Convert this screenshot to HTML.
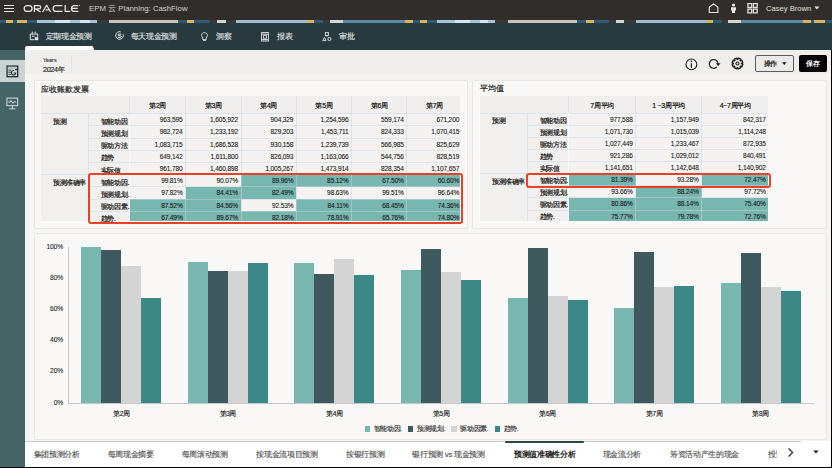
<!DOCTYPE html><html><head><meta charset="utf-8"><style>
*{box-sizing:border-box;margin:0;padding:0}
html,body{width:832px;height:468px;overflow:hidden;background:#f1f0ee;font-family:"Liberation Sans",sans-serif;color:#161513}
div,span,svg{position:absolute}
.t{white-space:nowrap;line-height:1}
.navt{font-size:8px;letter-spacing:-0.33px;color:#e4e7e7;top:33px;-webkit-text-stroke:0.12px #e4e7e7}
.btab{font-size:8px;letter-spacing:-0.33px;color:#4c4c4c;top:450.5px;-webkit-text-stroke:0.12px #4c4c4c}
.cell{font-size:7px;white-space:nowrap;line-height:1;-webkit-text-stroke:0.2px #161513}
</style></head><body>
<div style="left:0;top:0;width:832px;height:20px;background:#312d2a"></div>
<div style="left:4.2px;top:4.8px;width:10.2px;height:1.3px;background:#e8e4e0"></div>
<div style="left:4.2px;top:8.0px;width:10.2px;height:1.3px;background:#e8e4e0"></div>
<div style="left:4.2px;top:11.2px;width:10.2px;height:1.3px;background:#e8e4e0"></div>
<svg style="left:23px;top:4px" width="58" height="9" viewBox="0 0 58 9"><g fill="none" stroke="#ece8e4" stroke-width="1.25" stroke-linejoin="round"><rect x="1.15" y="1.55" width="7.9" height="5.8" rx="2.9"/><path d="M11.4 7.95 V1.55 H16 A1.7 1.7 0 0 1 16 4.95 H12.6 L17.6 7.95"/><path d="M19.6 7.95 L23.6 1.3 L27.6 7.95 M22.6 5.9 H25.6"/><path d="M39.3 1.55 H33 A2.9 2.9 0 0 0 33 7.35 H39.3"/><path d="M42.2 0.9 V7.35 H47.2"/><path d="M55.3 1.55 H51.4 A2.9 2.9 0 0 0 51.4 7.35 H55.3 M49.2 4.45 H54.6"/></g><circle cx="56.6" cy="1.4" r="0.5" fill="#ece8e4"/></svg>
<span class="t" style="left:89px;top:5px;font-size:7.8px;color:#d8d4cf">EPM 云 Planning: CashFlow</span>
<svg style="left:707px;top:3px" width="14" height="11" viewBox="0 0 14 11"><path d="M2.3 9.5 V4.3 L6.6 0.9 L10.9 4.3 V9.5 Z" fill="none" stroke="#e8e4e0" stroke-width="1.15" stroke-linejoin="round"/></svg>
<svg style="left:729px;top:3px" width="9" height="11" viewBox="0 0 9 11"><circle cx="4.5" cy="2" r="1.6" fill="#e8e4e0"/><path d="M2 4.3 H7 V7.6 H6 V10 H3 V7.6 H2 Z" fill="#e8e4e0"/></svg>
<svg style="left:747px;top:3px" width="12" height="11" viewBox="0 0 12 11"><g fill="none" stroke="#e8e4e0" stroke-width="1.25"><rect x="0.9" y="0.6" width="3.8" height="3.8"/><rect x="6.4" y="0.6" width="3.8" height="3.8"/><rect x="0.9" y="6.1" width="3.8" height="3.8"/><rect x="6.4" y="6.1" width="3.8" height="3.8"/></g></svg>
<span class="t" style="left:766px;top:5px;font-size:7.6px;color:#e4e0dc">Casey Brown</span>
<svg style="left:814px;top:6px" width="6" height="4" viewBox="0 0 6 4"><path d="M0.3 0.6 H5.5 L2.9 3.4 Z" fill="#e8e4e0"/></svg>
<div style="left:0;top:20px;width:832px;height:3px;background:linear-gradient(90deg,#2f5a76 0px,#2f5a76 6px,#d6b35c 6px,#d6b35c 13px,#2f5a76 13px,#2f5a76 17px,#d6b35c 17px,#d6b35c 27px,#2f5a76 27px,#2f5a76 37px,#a6c6d6 37px,#a6c6d6 55px,#d6e6ee 55px,#d6e6ee 70px,#a6c6d6 70px,#a6c6d6 80px,#d6e6ee 80px,#d6e6ee 90px,#a6c6d6 90px,#a6c6d6 97px,#3a3836 97px,#3a3836 109px,#c8c4bd 109px,#c8c4bd 178px,#2f5a76 178px,#2f5a76 187px,#d6b35c 187px,#d6b35c 194px,#2f5a76 194px,#2f5a76 210px,#3a3836 210px,#3a3836 217px,#d8d6d2 217px,#d8d6d2 226px,#3a3836 226px,#3a3836 236px,#9cc0d2 236px,#9cc0d2 307px,#d6b35c 307px,#d6b35c 314px,#2f5a76 314px,#2f5a76 323px,#3a3836 323px,#3a3836 330px,#d8d6d2 330px,#d8d6d2 343px,#5b8ba6 343px,#5b8ba6 405px,#d6b35c 405px,#d6b35c 413px,#2f5a76 413px,#2f5a76 420px,#d6b35c 420px,#d6b35c 427px,#2f5a76 427px,#2f5a76 437px,#a6c6d6 437px,#a6c6d6 455px,#d6e6ee 455px,#d6e6ee 470px,#a6c6d6 470px,#a6c6d6 480px,#d6e6ee 480px,#d6e6ee 488px,#a6c6d6 488px,#a6c6d6 495px,#3a3836 495px,#3a3836 508px,#c8c4bd 508px,#c8c4bd 577px,#2f5a76 577px,#2f5a76 586px,#d6b35c 586px,#d6b35c 594px,#2f5a76 594px,#2f5a76 609px,#3a3836 609px,#3a3836 616px,#d8d6d2 616px,#d8d6d2 624px,#3a3836 624px,#3a3836 636px,#9cc0d2 636px,#9cc0d2 706px,#d6b35c 706px,#d6b35c 713px,#2f5a76 713px,#2f5a76 722px,#3a3836 722px,#3a3836 728px,#d8d6d2 728px,#d8d6d2 741px,#5b8ba6 741px,#5b8ba6 803px,#d6b35c 803px,#d6b35c 811px,#2f5a76 811px,#2f5a76 814px,#d6b35c 814px,#d6b35c 825px,#2f5a76 825px,#2f5a76 832px)"></div>
<div style="left:0;top:23px;width:832px;height:27px;background:#283a3e"></div>
<svg style="left:22px;top:45px" width="76" height="6" viewBox="0 0 76 6"><path d="M3.2 6 V2.6 Q3.2 1.1 4.7 1.1 H70.6 L72.4 5.2 V6 Z" fill="#ffffff"/></svg>
<span class="t navt" style="left:45.5px">定期现金预测</span>
<span class="t navt" style="left:130.8px">每天现金预测</span>
<span class="t navt" style="left:216px">洞察</span>
<span class="t navt" style="left:277.2px">报表</span>
<span class="t navt" style="left:338.9px">审批</span>
<svg style="left:29px;top:31px" width="10" height="10" viewBox="0 0 10 10"><g fill="none" stroke="#e8eaea" stroke-width="1"><path d="M1.3 2.9 V8.7 H5.2"/><path d="M1.3 3 H8.7 V5.8"/><path d="M3.3 0.6 V2.6 M6.3 0.6 V2.6"/><path d="M3 5.2 H5.6"/></g><rect x="5.8" y="6.2" width="3.4" height="3" fill="#e8eaea"/></svg>
<svg style="left:114.5px;top:31px" width="10" height="10" viewBox="0 0 10 10"><path d="M8.07 3.2 A3.8 3.8 0 1 1 5.8 0.93" fill="none" stroke="#e4e7e7" stroke-width="0.95"/><path d="M6.3 3.1 H3.9 Q2.9 3.1 2.9 4.0 Q2.9 4.7 3.9 4.7 H5.1 Q6.1 4.7 6.1 5.6 Q6.1 6.4 5.1 6.4 H2.8" fill="none" stroke="#e4e7e7" stroke-width="1"/></svg>
<svg style="left:200.5px;top:31.5px" width="7" height="9" viewBox="0 0 7 9"><path d="M3.5 0.6 C5.3 0.6 6.4 1.9 6.4 3.4 C6.4 4.6 5.6 5.2 5.2 6 V7.6 H1.8 V6 C1.4 5.2 0.6 4.6 0.6 3.4 C0.6 1.9 1.7 0.6 3.5 0.6 Z M2.2 8.5 H4.8" fill="none" stroke="#e6e8e8" stroke-width="0.9"/></svg>
<svg style="left:261.3px;top:31.5px" width="8" height="10" viewBox="0 0 8 10"><rect x="0.6" y="0.6" width="6.8" height="8.4" fill="none" stroke="#e4e7e7" stroke-width="0.9"/><path d="M1.2 2.2 H6.8 M1.2 7.6 H6.8" stroke="#e4e7e7" stroke-width="1"/><rect x="2.4" y="3.6" width="3.2" height="2.6" fill="none" stroke="#e4e7e7" stroke-width="0.8"/></svg>
<svg style="left:322px;top:31.5px" width="10" height="10" viewBox="0 0 10 10"><g fill="none" stroke="#e4e7e7" stroke-width="0.9"><rect x="3.4" y="0.6" width="3" height="2.8"/><path d="M4.9 3.4 V4.8 M2.4 5.3 L0.7 8.6 H4.1 Z"/><circle cx="7.4" cy="7" r="1.6"/></g></svg>
<div style="left:0;top:50px;width:25px;height:418px;background:#456466"></div>
<div style="left:0;top:60px;width:25px;height:22px;background:#c8d3d4"></div>
<svg style="left:5.5px;top:64.5px" width="13" height="13" viewBox="0 0 13 13"><rect x="1.1" y="1.1" width="10.6" height="10.6" fill="#d6dcdc" stroke="#1e2a2b" stroke-width="1.3"/><rect x="1.8" y="1.8" width="9.2" height="2.3" fill="#b9c1c2"/><path d="M2.4 5.2 H5.5 M2.4 7.2 H5 M2.4 9.3 H5.4" stroke="#1e2a2b" stroke-width="0.9"/><path d="M9.9 7.8 A2.2 2.2 0 1 1 8.2 5.6" fill="none" stroke="#1e2a2b" stroke-width="1.1"/><path d="M7.6 8 H9.9" stroke="#1e2a2b" stroke-width="0.9"/><circle cx="10.1" cy="4.6" r="0.9" fill="#1e2a2b"/></svg>
<svg style="left:5.5px;top:96.5px" width="13" height="13" viewBox="0 0 13 13"><g fill="none" stroke="#e4eaea" stroke-width="0.9"><rect x="0.9" y="1.1" width="10.8" height="7.6"/><path d="M6.3 8.7 V11.6 M3.3 11.8 H9.3"/><path d="M2.4 5.1 H4.1 L5 3.6 L6.9 6.3 L7.9 4.8 H10"/></g></svg>
<div style="left:25px;top:50px;width:807px;height:24px;background:#efeeec"></div>
<div style="left:25px;top:74px;width:807px;height:394px;background:#f6f5f3"></div>
<span class="t" style="left:43px;top:57.5px;font-size:5.4px;color:#2a2a2a;-webkit-text-stroke:0.1px #2a2a2a">Years</span>
<span class="t" style="left:43px;top:66px;font-size:7.3px;color:#1f1f1f;letter-spacing:-0.38px;-webkit-text-stroke:0.15px #1f1f1f">2024年</span>
<div style="left:71px;top:56px;width:1px;height:17px;background:#e3e1dd"></div>
<svg style="left:685px;top:58px" width="13" height="13" viewBox="0 0 13 13"><circle cx="6.4" cy="6.4" r="5.4" fill="none" stroke="#1f1f1f" stroke-width="1.1"/><path d="M6.4 5.2 V10" stroke="#1f1f1f" stroke-width="1.2"/><circle cx="6.4" cy="3.4" r="0.8" fill="#1f1f1f"/></svg>
<svg style="left:708px;top:58px" width="13" height="13" viewBox="0 0 13 13"><path d="M10.1 5.9 A4.4 4.4 0 1 0 8.81 9.01" fill="none" stroke="#1f1f1f" stroke-width="1.2"/><path d="M7.9 5.3 H12.5 L10.2 8.3 Z" fill="#1f1f1f"/></svg>
<svg style="left:731.4px;top:57px" width="13" height="13" viewBox="0 0 13 13"><path d="M6.71 2.51 L7.32 1.16 L9.69 2.15 L9.18 3.53 L9.47 3.82 L10.85 3.31 L11.84 5.68 L10.49 6.29 L10.49 6.71 L11.84 7.32 L10.85 9.69 L9.47 9.18 L9.18 9.47 L9.69 10.85 L7.32 11.84 L6.71 10.49 L6.29 10.49 L5.68 11.84 L3.31 10.85 L3.82 9.47 L3.53 9.18 L2.15 9.69 L1.16 7.32 L2.51 6.71 L2.51 6.29 L1.16 5.68 L2.15 3.31 L3.53 3.82 L3.82 3.53 L3.31 2.15 L5.68 1.16 L6.29 2.51 Z" fill="none" stroke="#1f1f1f" stroke-width="1.4" stroke-linejoin="round"/><circle cx="6.5" cy="6.5" r="1.5" fill="none" stroke="#1f1f1f" stroke-width="1.1"/></svg>
<div style="left:755px;top:55px;width:38.5px;height:16.5px;background:#ebebea;border:1px solid #5c5c5c;border-radius:2px"></div>
<span class="t" style="left:763.5px;top:59.5px;font-size:7px;color:#1a1a1a;letter-spacing:-0.3px;-webkit-text-stroke:0.2px #1a1a1a">操作</span>
<svg style="left:782px;top:62px" width="5" height="4" viewBox="0 0 5 4"><path d="M0 0.3 H4.6 L2.3 3 Z" fill="#1a1a1a"/></svg>
<div style="left:799px;top:55px;width:27.5px;height:16.5px;background:#000;border-radius:2px"></div>
<span class="t" style="left:806px;top:59.5px;font-size:7px;color:#fff;letter-spacing:-0.3px;font-weight:bold">保存</span>
<div style="left:34px;top:80px;width:433.5px;height:148.5px;background:#f9f8f6;border:1px solid #e9e7e3;border-radius:2px"></div>
<div style="left:472px;top:80px;width:354.5px;height:148.5px;background:#f9f8f6;border:1px solid #e9e7e3;border-radius:2px"></div>
<div style="left:34px;top:233px;width:792.5px;height:206.5px;background:#f9f8f6;border:1px solid #e9e7e3;border-radius:2px"></div>
<span class="t" style="left:41px;top:85.6px;font-size:8px;letter-spacing:0px;color:#1a1a1a;-webkit-text-stroke:0.2px #1a1a1a">应收账款发票</span>
<span class="t" style="left:480px;top:85.2px;font-size:8px;letter-spacing:0px;color:#1a1a1a;-webkit-text-stroke:0.2px #1a1a1a">平均值</span>
<div style="left:41px;top:96px;width:421.2px;height:17.5px;background:#f0efed"></div>
<div style="left:41px;top:113.5px;width:88.80000000000001px;height:107.80000000000001px;background:#f1f0ee"></div>
<div style="left:129.8px;top:113.5px;width:55.79999999999998px;height:12.200000000000003px;background:#f4f3f1"></div>
<div style="left:185.6px;top:113.5px;width:55.400000000000006px;height:12.200000000000003px;background:#f4f3f1"></div>
<div style="left:241px;top:113.5px;width:55.39999999999998px;height:12.200000000000003px;background:#f4f3f1"></div>
<div style="left:296.4px;top:113.5px;width:55.200000000000045px;height:12.200000000000003px;background:#f4f3f1"></div>
<div style="left:351.6px;top:113.5px;width:55.19999999999999px;height:12.200000000000003px;background:#f4f3f1"></div>
<div style="left:406.8px;top:113.5px;width:55.39999999999998px;height:12.200000000000003px;background:#f4f3f1"></div>
<div style="left:129.8px;top:125.7px;width:55.79999999999998px;height:12.200000000000003px;background:#f4f3f1"></div>
<div style="left:185.6px;top:125.7px;width:55.400000000000006px;height:12.200000000000003px;background:#f4f3f1"></div>
<div style="left:241px;top:125.7px;width:55.39999999999998px;height:12.200000000000003px;background:#f4f3f1"></div>
<div style="left:296.4px;top:125.7px;width:55.200000000000045px;height:12.200000000000003px;background:#f4f3f1"></div>
<div style="left:351.6px;top:125.7px;width:55.19999999999999px;height:12.200000000000003px;background:#f4f3f1"></div>
<div style="left:406.8px;top:125.7px;width:55.39999999999998px;height:12.200000000000003px;background:#f4f3f1"></div>
<div style="left:129.8px;top:137.9px;width:55.79999999999998px;height:12.199999999999989px;background:#f4f3f1"></div>
<div style="left:185.6px;top:137.9px;width:55.400000000000006px;height:12.199999999999989px;background:#f4f3f1"></div>
<div style="left:241px;top:137.9px;width:55.39999999999998px;height:12.199999999999989px;background:#f4f3f1"></div>
<div style="left:296.4px;top:137.9px;width:55.200000000000045px;height:12.199999999999989px;background:#f4f3f1"></div>
<div style="left:351.6px;top:137.9px;width:55.19999999999999px;height:12.199999999999989px;background:#f4f3f1"></div>
<div style="left:406.8px;top:137.9px;width:55.39999999999998px;height:12.199999999999989px;background:#f4f3f1"></div>
<div style="left:129.8px;top:150.1px;width:55.79999999999998px;height:12.200000000000017px;background:#f4f3f1"></div>
<div style="left:185.6px;top:150.1px;width:55.400000000000006px;height:12.200000000000017px;background:#f4f3f1"></div>
<div style="left:241px;top:150.1px;width:55.39999999999998px;height:12.200000000000017px;background:#f4f3f1"></div>
<div style="left:296.4px;top:150.1px;width:55.200000000000045px;height:12.200000000000017px;background:#f4f3f1"></div>
<div style="left:351.6px;top:150.1px;width:55.19999999999999px;height:12.200000000000017px;background:#f4f3f1"></div>
<div style="left:406.8px;top:150.1px;width:55.39999999999998px;height:12.200000000000017px;background:#f4f3f1"></div>
<div style="left:129.8px;top:162.3px;width:55.79999999999998px;height:12.199999999999989px;background:#f4f3f1"></div>
<div style="left:185.6px;top:162.3px;width:55.400000000000006px;height:12.199999999999989px;background:#f4f3f1"></div>
<div style="left:241px;top:162.3px;width:55.39999999999998px;height:12.199999999999989px;background:#f4f3f1"></div>
<div style="left:296.4px;top:162.3px;width:55.200000000000045px;height:12.199999999999989px;background:#f4f3f1"></div>
<div style="left:351.6px;top:162.3px;width:55.19999999999999px;height:12.199999999999989px;background:#f4f3f1"></div>
<div style="left:406.8px;top:162.3px;width:55.39999999999998px;height:12.199999999999989px;background:#f4f3f1"></div>
<div style="left:129.8px;top:174.5px;width:55.79999999999998px;height:12.199999999999989px;background:#f4f3f1"></div>
<div style="left:185.6px;top:174.5px;width:55.400000000000006px;height:12.199999999999989px;background:#f4f3f1"></div>
<div style="left:241px;top:174.5px;width:55.39999999999998px;height:12.199999999999989px;background:#78b6b0"></div>
<div style="left:296.4px;top:174.5px;width:55.200000000000045px;height:12.199999999999989px;background:#78b6b0"></div>
<div style="left:351.6px;top:174.5px;width:55.19999999999999px;height:12.199999999999989px;background:#78b6b0"></div>
<div style="left:406.8px;top:174.5px;width:55.39999999999998px;height:12.199999999999989px;background:#78b6b0"></div>
<div style="left:129.8px;top:186.7px;width:55.79999999999998px;height:12.199999999999989px;background:#f4f3f1"></div>
<div style="left:185.6px;top:186.7px;width:55.400000000000006px;height:12.199999999999989px;background:#78b6b0"></div>
<div style="left:241px;top:186.7px;width:55.39999999999998px;height:12.199999999999989px;background:#78b6b0"></div>
<div style="left:296.4px;top:186.7px;width:55.200000000000045px;height:12.199999999999989px;background:#f4f3f1"></div>
<div style="left:351.6px;top:186.7px;width:55.19999999999999px;height:12.199999999999989px;background:#f4f3f1"></div>
<div style="left:406.8px;top:186.7px;width:55.39999999999998px;height:12.199999999999989px;background:#f4f3f1"></div>
<div style="left:129.8px;top:198.89999999999998px;width:55.79999999999998px;height:12.200000000000017px;background:#78b6b0"></div>
<div style="left:185.6px;top:198.89999999999998px;width:55.400000000000006px;height:12.200000000000017px;background:#78b6b0"></div>
<div style="left:241px;top:198.89999999999998px;width:55.39999999999998px;height:12.200000000000017px;background:#f4f3f1"></div>
<div style="left:296.4px;top:198.89999999999998px;width:55.200000000000045px;height:12.200000000000017px;background:#78b6b0"></div>
<div style="left:351.6px;top:198.89999999999998px;width:55.19999999999999px;height:12.200000000000017px;background:#78b6b0"></div>
<div style="left:406.8px;top:198.89999999999998px;width:55.39999999999998px;height:12.200000000000017px;background:#78b6b0"></div>
<div style="left:129.8px;top:211.1px;width:55.79999999999998px;height:10.200000000000017px;background:#78b6b0"></div>
<div style="left:185.6px;top:211.1px;width:55.400000000000006px;height:10.200000000000017px;background:#78b6b0"></div>
<div style="left:241px;top:211.1px;width:55.39999999999998px;height:10.200000000000017px;background:#78b6b0"></div>
<div style="left:296.4px;top:211.1px;width:55.200000000000045px;height:10.200000000000017px;background:#78b6b0"></div>
<div style="left:351.6px;top:211.1px;width:55.19999999999999px;height:10.200000000000017px;background:#78b6b0"></div>
<div style="left:406.8px;top:211.1px;width:55.39999999999998px;height:10.200000000000017px;background:#78b6b0"></div>
<div style="left:41px;top:113.2px;width:421.2px;height:1px;background:rgba(200,214,228,0.5)"></div>
<div style="left:88.6px;top:125.4px;width:373.6px;height:1px;background:rgba(200,214,228,0.5)"></div>
<div style="left:88.6px;top:137.6px;width:373.6px;height:1px;background:rgba(200,214,228,0.5)"></div>
<div style="left:88.6px;top:149.79999999999998px;width:373.6px;height:1px;background:rgba(200,214,228,0.5)"></div>
<div style="left:88.6px;top:162.0px;width:373.6px;height:1px;background:rgba(200,214,228,0.5)"></div>
<div style="left:88.6px;top:174.2px;width:373.6px;height:1px;background:rgba(200,214,228,0.5)"></div>
<div style="left:88.6px;top:186.39999999999998px;width:373.6px;height:1px;background:rgba(200,214,228,0.5)"></div>
<div style="left:88.6px;top:198.59999999999997px;width:373.6px;height:1px;background:rgba(200,214,228,0.5)"></div>
<div style="left:88.6px;top:210.79999999999998px;width:373.6px;height:1px;background:rgba(200,214,228,0.5)"></div>
<div style="left:41px;top:174.2px;width:47.599999999999994px;height:1px;background:rgba(200,214,228,0.5)"></div>
<div style="left:88.1px;top:113.5px;width:1px;height:107.80000000000001px;background:rgba(200,214,228,0.5)"></div>
<div style="left:129.3px;top:96px;width:1px;height:17.5px;background:rgba(200,214,228,0.5)"></div>
<div style="left:129.3px;top:113.5px;width:1px;height:107.80000000000001px;background:#f7f7f6"></div>
<div style="left:185.1px;top:96px;width:1px;height:125.30000000000001px;background:rgba(200,214,228,0.5)"></div>
<div style="left:240.5px;top:96px;width:1px;height:125.30000000000001px;background:rgba(200,214,228,0.5)"></div>
<div style="left:295.9px;top:96px;width:1px;height:125.30000000000001px;background:rgba(200,214,228,0.5)"></div>
<div style="left:351.1px;top:96px;width:1px;height:125.30000000000001px;background:rgba(200,214,228,0.5)"></div>
<div style="left:406.3px;top:96px;width:1px;height:125.30000000000001px;background:rgba(200,214,228,0.5)"></div>
<span class="t cell" style="left:129.8px;width:55.79999999999998px;top:101.7px;text-align:center;letter-spacing:-0.3px">第2周</span>
<span class="t cell" style="left:185.6px;width:55.400000000000006px;top:101.7px;text-align:center;letter-spacing:-0.3px">第3周</span>
<span class="t cell" style="left:241px;width:55.39999999999998px;top:101.7px;text-align:center;letter-spacing:-0.3px">第4周</span>
<span class="t cell" style="left:296.4px;width:55.200000000000045px;top:101.7px;text-align:center;letter-spacing:-0.3px">第5周</span>
<span class="t cell" style="left:351.6px;width:55.19999999999999px;top:101.7px;text-align:center;letter-spacing:-0.3px">第6周</span>
<span class="t cell" style="left:406.8px;width:55.39999999999998px;top:101.7px;text-align:center;letter-spacing:-0.3px">第7周</span>
<span class="t cell" style="left:53px;top:117.6px;letter-spacing:-0.5px">预测</span>
<span class="t cell" style="left:53px;top:178.6px;letter-spacing:-0.5px">预测准确率</span>
<span class="t cell" style="left:100.6px;top:117.8px;letter-spacing:-0.3px">智能动因</span>
<span class="t cell" style="left:100.6px;top:130.0px;letter-spacing:-0.3px">预测规划</span>
<span class="t cell" style="left:100.6px;top:142.20000000000002px;letter-spacing:-0.3px">驱动方法</span>
<span class="t cell" style="left:100.6px;top:154.4px;letter-spacing:-0.3px">趋势</span>
<span class="t cell" style="left:100.6px;top:166.60000000000002px;letter-spacing:-0.3px">实际值</span>
<span class="t cell" style="left:100.6px;top:178.8px;letter-spacing:-0.3px">智能动因.</span>
<span class="t cell" style="left:100.6px;top:191.0px;letter-spacing:-0.3px">预测规划.</span>
<span class="t cell" style="left:100.6px;top:203.2px;letter-spacing:-0.3px">驱动因素.</span>
<span class="t cell" style="left:100.6px;top:215.4px;letter-spacing:-0.3px">趋势.</span>
<span class="t cell" style="left:129.8px;width:52.79999999999998px;top:117.2px;text-align:right;font-size:6.6px;letter-spacing:-0.15px;-webkit-text-stroke:0.08px #161513">963,595</span>
<span class="t cell" style="left:185.6px;width:52.400000000000006px;top:117.2px;text-align:right;font-size:6.6px;letter-spacing:-0.15px;-webkit-text-stroke:0.08px #161513">1,605,922</span>
<span class="t cell" style="left:241px;width:52.39999999999998px;top:117.2px;text-align:right;font-size:6.6px;letter-spacing:-0.15px;-webkit-text-stroke:0.08px #161513">904,329</span>
<span class="t cell" style="left:296.4px;width:52.200000000000045px;top:117.2px;text-align:right;font-size:6.6px;letter-spacing:-0.15px;-webkit-text-stroke:0.08px #161513">1,254,596</span>
<span class="t cell" style="left:351.6px;width:52.19999999999999px;top:117.2px;text-align:right;font-size:6.6px;letter-spacing:-0.15px;-webkit-text-stroke:0.08px #161513">559,174</span>
<span class="t cell" style="left:406.8px;width:52.39999999999998px;top:117.2px;text-align:right;font-size:6.6px;letter-spacing:-0.15px;-webkit-text-stroke:0.08px #161513">671,200</span>
<span class="t cell" style="left:129.8px;width:52.79999999999998px;top:129.4px;text-align:right;font-size:6.6px;letter-spacing:-0.15px;-webkit-text-stroke:0.08px #161513">982,724</span>
<span class="t cell" style="left:185.6px;width:52.400000000000006px;top:129.4px;text-align:right;font-size:6.6px;letter-spacing:-0.15px;-webkit-text-stroke:0.08px #161513">1,233,192</span>
<span class="t cell" style="left:241px;width:52.39999999999998px;top:129.4px;text-align:right;font-size:6.6px;letter-spacing:-0.15px;-webkit-text-stroke:0.08px #161513">829,203</span>
<span class="t cell" style="left:296.4px;width:52.200000000000045px;top:129.4px;text-align:right;font-size:6.6px;letter-spacing:-0.15px;-webkit-text-stroke:0.08px #161513">1,453,711</span>
<span class="t cell" style="left:351.6px;width:52.19999999999999px;top:129.4px;text-align:right;font-size:6.6px;letter-spacing:-0.15px;-webkit-text-stroke:0.08px #161513">824,333</span>
<span class="t cell" style="left:406.8px;width:52.39999999999998px;top:129.4px;text-align:right;font-size:6.6px;letter-spacing:-0.15px;-webkit-text-stroke:0.08px #161513">1,070,415</span>
<span class="t cell" style="left:129.8px;width:52.79999999999998px;top:141.6px;text-align:right;font-size:6.6px;letter-spacing:-0.15px;-webkit-text-stroke:0.08px #161513">1,083,715</span>
<span class="t cell" style="left:185.6px;width:52.400000000000006px;top:141.6px;text-align:right;font-size:6.6px;letter-spacing:-0.15px;-webkit-text-stroke:0.08px #161513">1,686,528</span>
<span class="t cell" style="left:241px;width:52.39999999999998px;top:141.6px;text-align:right;font-size:6.6px;letter-spacing:-0.15px;-webkit-text-stroke:0.08px #161513">930,158</span>
<span class="t cell" style="left:296.4px;width:52.200000000000045px;top:141.6px;text-align:right;font-size:6.6px;letter-spacing:-0.15px;-webkit-text-stroke:0.08px #161513">1,239,739</span>
<span class="t cell" style="left:351.6px;width:52.19999999999999px;top:141.6px;text-align:right;font-size:6.6px;letter-spacing:-0.15px;-webkit-text-stroke:0.08px #161513">566,985</span>
<span class="t cell" style="left:406.8px;width:52.39999999999998px;top:141.6px;text-align:right;font-size:6.6px;letter-spacing:-0.15px;-webkit-text-stroke:0.08px #161513">825,629</span>
<span class="t cell" style="left:129.8px;width:52.79999999999998px;top:153.79999999999998px;text-align:right;font-size:6.6px;letter-spacing:-0.15px;-webkit-text-stroke:0.08px #161513">649,142</span>
<span class="t cell" style="left:185.6px;width:52.400000000000006px;top:153.79999999999998px;text-align:right;font-size:6.6px;letter-spacing:-0.15px;-webkit-text-stroke:0.08px #161513">1,611,800</span>
<span class="t cell" style="left:241px;width:52.39999999999998px;top:153.79999999999998px;text-align:right;font-size:6.6px;letter-spacing:-0.15px;-webkit-text-stroke:0.08px #161513">826,093</span>
<span class="t cell" style="left:296.4px;width:52.200000000000045px;top:153.79999999999998px;text-align:right;font-size:6.6px;letter-spacing:-0.15px;-webkit-text-stroke:0.08px #161513">1,163,066</span>
<span class="t cell" style="left:351.6px;width:52.19999999999999px;top:153.79999999999998px;text-align:right;font-size:6.6px;letter-spacing:-0.15px;-webkit-text-stroke:0.08px #161513">544,756</span>
<span class="t cell" style="left:406.8px;width:52.39999999999998px;top:153.79999999999998px;text-align:right;font-size:6.6px;letter-spacing:-0.15px;-webkit-text-stroke:0.08px #161513">828,519</span>
<span class="t cell" style="left:129.8px;width:52.79999999999998px;top:166.0px;text-align:right;font-size:6.6px;letter-spacing:-0.15px;-webkit-text-stroke:0.08px #161513">961,780</span>
<span class="t cell" style="left:185.6px;width:52.400000000000006px;top:166.0px;text-align:right;font-size:6.6px;letter-spacing:-0.15px;-webkit-text-stroke:0.08px #161513">1,460,898</span>
<span class="t cell" style="left:241px;width:52.39999999999998px;top:166.0px;text-align:right;font-size:6.6px;letter-spacing:-0.15px;-webkit-text-stroke:0.08px #161513">1,005,267</span>
<span class="t cell" style="left:296.4px;width:52.200000000000045px;top:166.0px;text-align:right;font-size:6.6px;letter-spacing:-0.15px;-webkit-text-stroke:0.08px #161513">1,473,914</span>
<span class="t cell" style="left:351.6px;width:52.19999999999999px;top:166.0px;text-align:right;font-size:6.6px;letter-spacing:-0.15px;-webkit-text-stroke:0.08px #161513">828,354</span>
<span class="t cell" style="left:406.8px;width:52.39999999999998px;top:166.0px;text-align:right;font-size:6.6px;letter-spacing:-0.15px;-webkit-text-stroke:0.08px #161513">1,107,657</span>
<span class="t cell" style="left:129.8px;width:52.79999999999998px;top:178.2px;text-align:right;font-size:6.6px;letter-spacing:-0.15px;-webkit-text-stroke:0.08px #161513">99.81%</span>
<span class="t cell" style="left:185.6px;width:52.400000000000006px;top:178.2px;text-align:right;font-size:6.6px;letter-spacing:-0.15px;-webkit-text-stroke:0.08px #161513">90.07%</span>
<span class="t cell" style="left:241px;width:52.39999999999998px;top:178.2px;text-align:right;font-size:6.6px;letter-spacing:-0.15px;-webkit-text-stroke:0.08px #161513">89.96%</span>
<span class="t cell" style="left:296.4px;width:52.200000000000045px;top:178.2px;text-align:right;font-size:6.6px;letter-spacing:-0.15px;-webkit-text-stroke:0.08px #161513">85.12%</span>
<span class="t cell" style="left:351.6px;width:52.19999999999999px;top:178.2px;text-align:right;font-size:6.6px;letter-spacing:-0.15px;-webkit-text-stroke:0.08px #161513">67.50%</span>
<span class="t cell" style="left:406.8px;width:52.39999999999998px;top:178.2px;text-align:right;font-size:6.6px;letter-spacing:-0.15px;-webkit-text-stroke:0.08px #161513">60.60%</span>
<span class="t cell" style="left:129.8px;width:52.79999999999998px;top:190.39999999999998px;text-align:right;font-size:6.6px;letter-spacing:-0.15px;-webkit-text-stroke:0.08px #161513">97.82%</span>
<span class="t cell" style="left:185.6px;width:52.400000000000006px;top:190.39999999999998px;text-align:right;font-size:6.6px;letter-spacing:-0.15px;-webkit-text-stroke:0.08px #161513">84.41%</span>
<span class="t cell" style="left:241px;width:52.39999999999998px;top:190.39999999999998px;text-align:right;font-size:6.6px;letter-spacing:-0.15px;-webkit-text-stroke:0.08px #161513">82.49%</span>
<span class="t cell" style="left:296.4px;width:52.200000000000045px;top:190.39999999999998px;text-align:right;font-size:6.6px;letter-spacing:-0.15px;-webkit-text-stroke:0.08px #161513">98.63%</span>
<span class="t cell" style="left:351.6px;width:52.19999999999999px;top:190.39999999999998px;text-align:right;font-size:6.6px;letter-spacing:-0.15px;-webkit-text-stroke:0.08px #161513">99.51%</span>
<span class="t cell" style="left:406.8px;width:52.39999999999998px;top:190.39999999999998px;text-align:right;font-size:6.6px;letter-spacing:-0.15px;-webkit-text-stroke:0.08px #161513">96.64%</span>
<span class="t cell" style="left:129.8px;width:52.79999999999998px;top:202.59999999999997px;text-align:right;font-size:6.6px;letter-spacing:-0.15px;-webkit-text-stroke:0.08px #161513">87.52%</span>
<span class="t cell" style="left:185.6px;width:52.400000000000006px;top:202.59999999999997px;text-align:right;font-size:6.6px;letter-spacing:-0.15px;-webkit-text-stroke:0.08px #161513">84.56%</span>
<span class="t cell" style="left:241px;width:52.39999999999998px;top:202.59999999999997px;text-align:right;font-size:6.6px;letter-spacing:-0.15px;-webkit-text-stroke:0.08px #161513">92.53%</span>
<span class="t cell" style="left:296.4px;width:52.200000000000045px;top:202.59999999999997px;text-align:right;font-size:6.6px;letter-spacing:-0.15px;-webkit-text-stroke:0.08px #161513">84.11%</span>
<span class="t cell" style="left:351.6px;width:52.19999999999999px;top:202.59999999999997px;text-align:right;font-size:6.6px;letter-spacing:-0.15px;-webkit-text-stroke:0.08px #161513">68.45%</span>
<span class="t cell" style="left:406.8px;width:52.39999999999998px;top:202.59999999999997px;text-align:right;font-size:6.6px;letter-spacing:-0.15px;-webkit-text-stroke:0.08px #161513">74.36%</span>
<span class="t cell" style="left:129.8px;width:52.79999999999998px;top:214.79999999999998px;text-align:right;font-size:6.6px;letter-spacing:-0.15px;-webkit-text-stroke:0.08px #161513">67.49%</span>
<span class="t cell" style="left:185.6px;width:52.400000000000006px;top:214.79999999999998px;text-align:right;font-size:6.6px;letter-spacing:-0.15px;-webkit-text-stroke:0.08px #161513">89.67%</span>
<span class="t cell" style="left:241px;width:52.39999999999998px;top:214.79999999999998px;text-align:right;font-size:6.6px;letter-spacing:-0.15px;-webkit-text-stroke:0.08px #161513">82.18%</span>
<span class="t cell" style="left:296.4px;width:52.200000000000045px;top:214.79999999999998px;text-align:right;font-size:6.6px;letter-spacing:-0.15px;-webkit-text-stroke:0.08px #161513">78.91%</span>
<span class="t cell" style="left:351.6px;width:52.19999999999999px;top:214.79999999999998px;text-align:right;font-size:6.6px;letter-spacing:-0.15px;-webkit-text-stroke:0.08px #161513">65.76%</span>
<span class="t cell" style="left:406.8px;width:52.39999999999998px;top:214.79999999999998px;text-align:right;font-size:6.6px;letter-spacing:-0.15px;-webkit-text-stroke:0.08px #161513">74.80%</span>
<div style="left:41px;top:221.6px;width:421.2px;height:1.8px;background:#fefefd"></div>
<div style="left:460.2px;top:95px;width:2.6px;height:130px;background:#f9f8f6"></div>
<div style="left:87.6px;top:172.7px;width:375.9px;height:51.400000000000006px;border:2px solid #e8412a;border-radius:3px"></div>
<div style="left:480.2px;top:96px;width:288.59999999999997px;height:17.0px;background:#f0efed"></div>
<div style="left:480.2px;top:113.0px;width:88.50000000000006px;height:108.30000000000001px;background:#f1f0ee"></div>
<div style="left:568.7px;top:113.0px;width:67.0px;height:12.099999999999994px;background:#f4f3f1"></div>
<div style="left:635.7px;top:113.0px;width:66.0px;height:12.099999999999994px;background:#f4f3f1"></div>
<div style="left:701.7px;top:113.0px;width:67.09999999999991px;height:12.099999999999994px;background:#f4f3f1"></div>
<div style="left:568.7px;top:125.1px;width:67.0px;height:12.099999999999994px;background:#f4f3f1"></div>
<div style="left:635.7px;top:125.1px;width:66.0px;height:12.099999999999994px;background:#f4f3f1"></div>
<div style="left:701.7px;top:125.1px;width:67.09999999999991px;height:12.099999999999994px;background:#f4f3f1"></div>
<div style="left:568.7px;top:137.2px;width:67.0px;height:12.100000000000023px;background:#f4f3f1"></div>
<div style="left:635.7px;top:137.2px;width:66.0px;height:12.100000000000023px;background:#f4f3f1"></div>
<div style="left:701.7px;top:137.2px;width:67.09999999999991px;height:12.100000000000023px;background:#f4f3f1"></div>
<div style="left:568.7px;top:149.3px;width:67.0px;height:12.099999999999994px;background:#f4f3f1"></div>
<div style="left:635.7px;top:149.3px;width:66.0px;height:12.099999999999994px;background:#f4f3f1"></div>
<div style="left:701.7px;top:149.3px;width:67.09999999999991px;height:12.099999999999994px;background:#f4f3f1"></div>
<div style="left:568.7px;top:161.4px;width:67.0px;height:12.099999999999994px;background:#f4f3f1"></div>
<div style="left:635.7px;top:161.4px;width:66.0px;height:12.099999999999994px;background:#f4f3f1"></div>
<div style="left:701.7px;top:161.4px;width:67.09999999999991px;height:12.099999999999994px;background:#f4f3f1"></div>
<div style="left:568.7px;top:173.5px;width:67.0px;height:12.099999999999994px;background:#78b6b0"></div>
<div style="left:635.7px;top:173.5px;width:66.0px;height:12.099999999999994px;background:#f4f3f1"></div>
<div style="left:701.7px;top:173.5px;width:67.09999999999991px;height:12.099999999999994px;background:#78b6b0"></div>
<div style="left:568.7px;top:185.6px;width:67.0px;height:12.099999999999994px;background:#f4f3f1"></div>
<div style="left:635.7px;top:185.6px;width:66.0px;height:12.099999999999994px;background:#78b6b0"></div>
<div style="left:701.7px;top:185.6px;width:67.09999999999991px;height:12.099999999999994px;background:#f4f3f1"></div>
<div style="left:568.7px;top:197.7px;width:67.0px;height:12.100000000000023px;background:#78b6b0"></div>
<div style="left:635.7px;top:197.7px;width:66.0px;height:12.100000000000023px;background:#78b6b0"></div>
<div style="left:701.7px;top:197.7px;width:67.09999999999991px;height:12.100000000000023px;background:#78b6b0"></div>
<div style="left:568.7px;top:209.8px;width:67.0px;height:11.5px;background:#78b6b0"></div>
<div style="left:635.7px;top:209.8px;width:66.0px;height:11.5px;background:#78b6b0"></div>
<div style="left:701.7px;top:209.8px;width:67.09999999999991px;height:11.5px;background:#78b6b0"></div>
<div style="left:480.2px;top:112.7px;width:288.59999999999997px;height:1px;background:rgba(200,214,228,0.5)"></div>
<div style="left:527.5px;top:124.8px;width:241.29999999999995px;height:1px;background:rgba(200,214,228,0.5)"></div>
<div style="left:527.5px;top:136.89999999999998px;width:241.29999999999995px;height:1px;background:rgba(200,214,228,0.5)"></div>
<div style="left:527.5px;top:149.0px;width:241.29999999999995px;height:1px;background:rgba(200,214,228,0.5)"></div>
<div style="left:527.5px;top:161.1px;width:241.29999999999995px;height:1px;background:rgba(200,214,228,0.5)"></div>
<div style="left:527.5px;top:173.2px;width:241.29999999999995px;height:1px;background:rgba(200,214,228,0.5)"></div>
<div style="left:527.5px;top:185.29999999999998px;width:241.29999999999995px;height:1px;background:rgba(200,214,228,0.5)"></div>
<div style="left:527.5px;top:197.39999999999998px;width:241.29999999999995px;height:1px;background:rgba(200,214,228,0.5)"></div>
<div style="left:527.5px;top:209.5px;width:241.29999999999995px;height:1px;background:rgba(200,214,228,0.5)"></div>
<div style="left:480.2px;top:173.2px;width:47.30000000000001px;height:1px;background:rgba(200,214,228,0.5)"></div>
<div style="left:527.0px;top:113.0px;width:1px;height:108.30000000000001px;background:rgba(200,214,228,0.5)"></div>
<div style="left:568.2px;top:96px;width:1px;height:17.0px;background:rgba(200,214,228,0.5)"></div>
<div style="left:568.2px;top:113.0px;width:1px;height:108.30000000000001px;background:#f7f7f6"></div>
<div style="left:635.2px;top:96px;width:1px;height:125.30000000000001px;background:rgba(200,214,228,0.5)"></div>
<div style="left:701.2px;top:96px;width:1px;height:125.30000000000001px;background:rgba(200,214,228,0.5)"></div>
<span class="t cell" style="left:568.7px;width:67.0px;top:101.7px;text-align:center;letter-spacing:-0.3px">7周平均</span>
<span class="t cell" style="left:635.7px;width:66.0px;top:101.7px;text-align:center;letter-spacing:-0.3px">1 ~3周平均</span>
<span class="t cell" style="left:701.7px;width:67.09999999999991px;top:101.7px;text-align:center;letter-spacing:-0.3px">4~7周平均</span>
<span class="t cell" style="left:492.2px;top:117.1px;letter-spacing:-0.5px">预测</span>
<span class="t cell" style="left:492.2px;top:177.6px;letter-spacing:-0.5px">预测准确率</span>
<span class="t cell" style="left:539.5px;top:116.6px;letter-spacing:-0.3px">智能动因</span>
<span class="t cell" style="left:539.5px;top:128.7px;letter-spacing:-0.3px">预测规划</span>
<span class="t cell" style="left:539.5px;top:140.79999999999998px;letter-spacing:-0.3px">驱动方法</span>
<span class="t cell" style="left:539.5px;top:152.9px;letter-spacing:-0.3px">趋势</span>
<span class="t cell" style="left:539.5px;top:165.0px;letter-spacing:-0.3px">实际值</span>
<span class="t cell" style="left:539.5px;top:177.1px;letter-spacing:-0.3px">智能动因.</span>
<span class="t cell" style="left:539.5px;top:189.2px;letter-spacing:-0.3px">预测规划.</span>
<span class="t cell" style="left:539.5px;top:201.29999999999998px;letter-spacing:-0.3px">驱动因素.</span>
<span class="t cell" style="left:539.5px;top:213.4px;letter-spacing:-0.3px">趋势.</span>
<span class="t cell" style="left:568.7px;width:64.0px;top:116.7px;text-align:right;font-size:6.6px;letter-spacing:-0.15px;-webkit-text-stroke:0.08px #161513">977,588</span>
<span class="t cell" style="left:635.7px;width:63.0px;top:116.7px;text-align:right;font-size:6.6px;letter-spacing:-0.15px;-webkit-text-stroke:0.08px #161513">1,157,949</span>
<span class="t cell" style="left:701.7px;width:64.09999999999991px;top:116.7px;text-align:right;font-size:6.6px;letter-spacing:-0.15px;-webkit-text-stroke:0.08px #161513">842,317</span>
<span class="t cell" style="left:568.7px;width:64.0px;top:128.79999999999998px;text-align:right;font-size:6.6px;letter-spacing:-0.15px;-webkit-text-stroke:0.08px #161513">1,071,730</span>
<span class="t cell" style="left:635.7px;width:63.0px;top:128.79999999999998px;text-align:right;font-size:6.6px;letter-spacing:-0.15px;-webkit-text-stroke:0.08px #161513">1,015,039</span>
<span class="t cell" style="left:701.7px;width:64.09999999999991px;top:128.79999999999998px;text-align:right;font-size:6.6px;letter-spacing:-0.15px;-webkit-text-stroke:0.08px #161513">1,114,248</span>
<span class="t cell" style="left:568.7px;width:64.0px;top:140.89999999999998px;text-align:right;font-size:6.6px;letter-spacing:-0.15px;-webkit-text-stroke:0.08px #161513">1,027,449</span>
<span class="t cell" style="left:635.7px;width:63.0px;top:140.89999999999998px;text-align:right;font-size:6.6px;letter-spacing:-0.15px;-webkit-text-stroke:0.08px #161513">1,233,467</span>
<span class="t cell" style="left:701.7px;width:64.09999999999991px;top:140.89999999999998px;text-align:right;font-size:6.6px;letter-spacing:-0.15px;-webkit-text-stroke:0.08px #161513">872,935</span>
<span class="t cell" style="left:568.7px;width:64.0px;top:153.0px;text-align:right;font-size:6.6px;letter-spacing:-0.15px;-webkit-text-stroke:0.08px #161513">921,286</span>
<span class="t cell" style="left:635.7px;width:63.0px;top:153.0px;text-align:right;font-size:6.6px;letter-spacing:-0.15px;-webkit-text-stroke:0.08px #161513">1,029,012</span>
<span class="t cell" style="left:701.7px;width:64.09999999999991px;top:153.0px;text-align:right;font-size:6.6px;letter-spacing:-0.15px;-webkit-text-stroke:0.08px #161513">840,491</span>
<span class="t cell" style="left:568.7px;width:64.0px;top:165.1px;text-align:right;font-size:6.6px;letter-spacing:-0.15px;-webkit-text-stroke:0.08px #161513">1,141,651</span>
<span class="t cell" style="left:635.7px;width:63.0px;top:165.1px;text-align:right;font-size:6.6px;letter-spacing:-0.15px;-webkit-text-stroke:0.08px #161513">1,142,648</span>
<span class="t cell" style="left:701.7px;width:64.09999999999991px;top:165.1px;text-align:right;font-size:6.6px;letter-spacing:-0.15px;-webkit-text-stroke:0.08px #161513">1,140,902</span>
<span class="t cell" style="left:568.7px;width:64.0px;top:177.2px;text-align:right;font-size:6.6px;letter-spacing:-0.15px;-webkit-text-stroke:0.08px #161513">81.39%</span>
<span class="t cell" style="left:635.7px;width:63.0px;top:177.2px;text-align:right;font-size:6.6px;letter-spacing:-0.15px;-webkit-text-stroke:0.08px #161513">93.28%</span>
<span class="t cell" style="left:701.7px;width:64.09999999999991px;top:177.2px;text-align:right;font-size:6.6px;letter-spacing:-0.15px;-webkit-text-stroke:0.08px #161513">72.47%</span>
<span class="t cell" style="left:568.7px;width:64.0px;top:189.29999999999998px;text-align:right;font-size:6.6px;letter-spacing:-0.15px;-webkit-text-stroke:0.08px #161513">93.66%</span>
<span class="t cell" style="left:635.7px;width:63.0px;top:189.29999999999998px;text-align:right;font-size:6.6px;letter-spacing:-0.15px;-webkit-text-stroke:0.08px #161513">88.24%</span>
<span class="t cell" style="left:701.7px;width:64.09999999999991px;top:189.29999999999998px;text-align:right;font-size:6.6px;letter-spacing:-0.15px;-webkit-text-stroke:0.08px #161513">97.72%</span>
<span class="t cell" style="left:568.7px;width:64.0px;top:201.39999999999998px;text-align:right;font-size:6.6px;letter-spacing:-0.15px;-webkit-text-stroke:0.08px #161513">80.86%</span>
<span class="t cell" style="left:635.7px;width:63.0px;top:201.39999999999998px;text-align:right;font-size:6.6px;letter-spacing:-0.15px;-webkit-text-stroke:0.08px #161513">88.14%</span>
<span class="t cell" style="left:701.7px;width:64.09999999999991px;top:201.39999999999998px;text-align:right;font-size:6.6px;letter-spacing:-0.15px;-webkit-text-stroke:0.08px #161513">75.40%</span>
<span class="t cell" style="left:568.7px;width:64.0px;top:213.5px;text-align:right;font-size:6.6px;letter-spacing:-0.15px;-webkit-text-stroke:0.08px #161513">75.77%</span>
<span class="t cell" style="left:635.7px;width:63.0px;top:213.5px;text-align:right;font-size:6.6px;letter-spacing:-0.15px;-webkit-text-stroke:0.08px #161513">79.78%</span>
<span class="t cell" style="left:701.7px;width:64.09999999999991px;top:213.5px;text-align:right;font-size:6.6px;letter-spacing:-0.15px;-webkit-text-stroke:0.08px #161513">72.76%</span>
<div style="left:480.2px;top:221.6px;width:288.59999999999997px;height:1.8px;background:#fefefd"></div>
<div style="left:767.8px;top:95px;width:1.6px;height:130px;background:#f9f8f6"></div>
<div style="left:526.3px;top:173.1px;width:244.70000000000005px;height:14.599999999999994px;border:2px solid #e8412a;border-radius:3px"></div>
<div style="left:68px;top:247px;width:1px;height:156.5px;background:#c8c8c8"></div>
<div style="left:68px;top:403.0px;width:746px;height:1px;background:#c8c8c8"></div>
<span class="t" style="left:30px;width:33px;text-align:right;top:243.6px;font-size:6.7px;color:#2a2a2a;letter-spacing:-0.15px;-webkit-text-stroke:0.1px #2a2a2a">100%</span>
<span class="t" style="left:30px;width:33px;text-align:right;top:274.8px;font-size:6.7px;color:#2a2a2a;letter-spacing:-0.15px;-webkit-text-stroke:0.1px #2a2a2a">80%</span>
<span class="t" style="left:30px;width:33px;text-align:right;top:306.0px;font-size:6.7px;color:#2a2a2a;letter-spacing:-0.15px;-webkit-text-stroke:0.1px #2a2a2a">60%</span>
<span class="t" style="left:30px;width:33px;text-align:right;top:337.20000000000005px;font-size:6.7px;color:#2a2a2a;letter-spacing:-0.15px;-webkit-text-stroke:0.1px #2a2a2a">40%</span>
<span class="t" style="left:30px;width:33px;text-align:right;top:368.40000000000003px;font-size:6.7px;color:#2a2a2a;letter-spacing:-0.15px;-webkit-text-stroke:0.1px #2a2a2a">20%</span>
<span class="t" style="left:30px;width:33px;text-align:right;top:399.6px;font-size:6.7px;color:#2a2a2a;letter-spacing:-0.15px;-webkit-text-stroke:0.1px #2a2a2a">0%</span>
<div style="left:81.29px;top:247.30px;width:20px;height:155.70px;background:#78b6b0"></div>
<div style="left:101.29px;top:250.40px;width:20px;height:152.60px;background:#3f5a5e"></div>
<div style="left:121.29px;top:266.47px;width:20px;height:136.53px;background:#d4d4d4"></div>
<div style="left:141.29px;top:297.72px;width:20px;height:105.28px;background:#3b8886"></div>
<span class="t" style="left:96.29px;width:50px;text-align:center;top:411px;font-size:6.5px;color:#222;letter-spacing:-0.4px;-webkit-text-stroke:0.15px #222">第2周</span>
<div style="left:187.86px;top:262.49px;width:20px;height:140.51px;background:#78b6b0"></div>
<div style="left:207.86px;top:271.32px;width:20px;height:131.68px;background:#3f5a5e"></div>
<div style="left:227.86px;top:271.09px;width:20px;height:131.91px;background:#d4d4d4"></div>
<div style="left:247.86px;top:263.11px;width:20px;height:139.89px;background:#3b8886"></div>
<span class="t" style="left:202.86px;width:50px;text-align:center;top:411px;font-size:6.5px;color:#222;letter-spacing:-0.4px;-webkit-text-stroke:0.15px #222">第3周</span>
<div style="left:294.43px;top:262.66px;width:20px;height:140.34px;background:#78b6b0"></div>
<div style="left:314.43px;top:274.32px;width:20px;height:128.68px;background:#3f5a5e"></div>
<div style="left:334.43px;top:258.65px;width:20px;height:144.35px;background:#d4d4d4"></div>
<div style="left:354.43px;top:274.80px;width:20px;height:128.20px;background:#3b8886"></div>
<span class="t" style="left:309.43px;width:50px;text-align:center;top:411px;font-size:6.5px;color:#222;letter-spacing:-0.4px;-webkit-text-stroke:0.15px #222">第4周</span>
<div style="left:401.00px;top:270.21px;width:20px;height:132.79px;background:#78b6b0"></div>
<div style="left:421.00px;top:249.14px;width:20px;height:153.86px;background:#3f5a5e"></div>
<div style="left:441.00px;top:271.79px;width:20px;height:131.21px;background:#d4d4d4"></div>
<div style="left:461.00px;top:279.90px;width:20px;height:123.10px;background:#3b8886"></div>
<span class="t" style="left:416.00px;width:50px;text-align:center;top:411px;font-size:6.5px;color:#222;letter-spacing:-0.4px;-webkit-text-stroke:0.15px #222">第5周</span>
<div style="left:507.57px;top:297.70px;width:20px;height:105.30px;background:#78b6b0"></div>
<div style="left:527.57px;top:247.76px;width:20px;height:155.24px;background:#3f5a5e"></div>
<div style="left:547.57px;top:296.22px;width:20px;height:106.78px;background:#d4d4d4"></div>
<div style="left:567.57px;top:300.41px;width:20px;height:102.59px;background:#3b8886"></div>
<span class="t" style="left:522.57px;width:50px;text-align:center;top:411px;font-size:6.5px;color:#222;letter-spacing:-0.4px;-webkit-text-stroke:0.15px #222">第6周</span>
<div style="left:614.14px;top:308.46px;width:20px;height:94.54px;background:#78b6b0"></div>
<div style="left:634.14px;top:252.24px;width:20px;height:150.76px;background:#3f5a5e"></div>
<div style="left:654.14px;top:287.00px;width:20px;height:116.00px;background:#d4d4d4"></div>
<div style="left:674.14px;top:286.31px;width:20px;height:116.69px;background:#3b8886"></div>
<span class="t" style="left:629.14px;width:50px;text-align:center;top:411px;font-size:6.5px;color:#222;letter-spacing:-0.4px;-webkit-text-stroke:0.15px #222">第7周</span>
<div style="left:720.71px;top:283.39px;width:20px;height:119.61px;background:#78b6b0"></div>
<div style="left:740.71px;top:253.05px;width:20px;height:149.95px;background:#3f5a5e"></div>
<div style="left:760.71px;top:286.80px;width:20px;height:116.20px;background:#d4d4d4"></div>
<div style="left:780.71px;top:291.34px;width:20px;height:111.66px;background:#3b8886"></div>
<span class="t" style="left:735.71px;width:50px;text-align:center;top:411px;font-size:6.5px;color:#222;letter-spacing:-0.4px;-webkit-text-stroke:0.15px #222">第8周</span>
<div style="left:364.60px;top:426.3px;width:5.4px;height:5.4px;background:#78b6b0"></div>
<span class="t" style="left:373.80px;top:425.8px;font-size:6.5px;color:#333;letter-spacing:-0.4px;-webkit-text-stroke:0.15px #333">智能动因.</span>
<div style="left:407.90px;top:426.3px;width:5.4px;height:5.4px;background:#3f5a5e"></div>
<span class="t" style="left:417.10px;top:425.8px;font-size:6.5px;color:#333;letter-spacing:-0.4px;-webkit-text-stroke:0.15px #333">预测规划.</span>
<div style="left:451.20px;top:426.3px;width:5.4px;height:5.4px;background:#d4d4d4"></div>
<span class="t" style="left:460.40px;top:425.8px;font-size:6.5px;color:#333;letter-spacing:-0.4px;-webkit-text-stroke:0.15px #333">驱动因素.</span>
<div style="left:494.50px;top:426.3px;width:5.4px;height:5.4px;background:#3b8886"></div>
<span class="t" style="left:503.70px;top:425.8px;font-size:6.5px;color:#333;letter-spacing:-0.4px;-webkit-text-stroke:0.15px #333">趋势.</span>
<div style="left:25px;top:441px;width:807px;height:27px;background:#fff"></div>
<div style="left:25px;top:441px;width:776px;height:1px;background:#c9cbcd"></div>
<span class="t btab" style="left:33.7px;">集团预测分析</span>
<span class="t btab" style="left:107.8px;">每周现金摘要</span>
<span class="t btab" style="left:181.8px;">每周滚动预测</span>
<span class="t btab" style="left:256.2px;">按现金流项目预测</span>
<span class="t btab" style="left:346px;">按银行预测</span>
<span class="t btab" style="left:412.3px;">银行预测 vs 现金预测</span>
<span class="t btab" style="left:514.1px;color:#161513;-webkit-text-stroke:0.3px #161513;">预测值准确性分析</span>
<span class="t btab" style="left:602.7px;">现金流分析</span>
<span class="t btab" style="left:670px;">筹资活动产生的现金</span>
<span class="t btab" style="left:767.6px;">投资</span>
<div style="left:777px;top:442px;width:54px;height:24px;background:#fff"></div>
<div style="left:505px;top:441px;width:78.5px;height:2px;background:#2c4548;border-radius:1px"></div>
<svg style="left:786.5px;top:448px" width="8" height="10" viewBox="0 0 8 10"><path d="M1.6 0.6 L5.6 4.6 L1.6 8.6" fill="none" stroke="#3a3a3a" stroke-width="1.35"/></svg>
<svg style="left:813px;top:450px" width="6" height="4" viewBox="0 0 6 4"><path d="M0.2 0.5 H5.6 L2.9 3.5 Z" fill="#222"/></svg>
<div style="left:0;top:467px;width:832px;height:1px;background:#000"></div>
<div style="left:831px;top:50px;width:1px;height:418px;background:#000"></div>
</body></html>
